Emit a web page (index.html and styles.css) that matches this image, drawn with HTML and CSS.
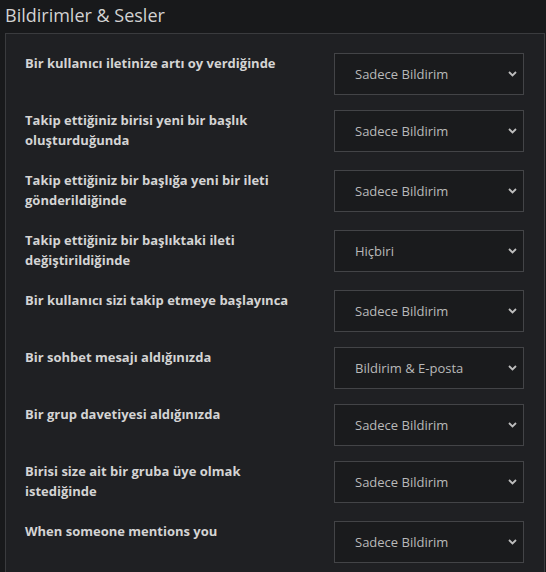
FILE: index.html
```html
<!DOCTYPE html>
<html lang="tr">
<head>
    <meta charset="UTF-8">
    <title>Bildirimler &amp; Sesler</title>
    <meta name="viewport" content="width=device-width, initial-scale=1.0">
    <link rel="stylesheet" href="styles.css">
</head>
<body>

    <h2 class="section-title">Bildirimler &amp; Sesler</h2>

    <div class="panel">
        <div class="setting-row">
            <label for="n-upvote">Bir kullanıcı iletinize artı oy verdiğinde</label>
            <select id="n-upvote">
                <option>Hiçbiri</option>
                <option selected>Sadece Bildirim</option>
                <option>Bildirim &amp; E-posta</option>
            </select>
        </div>

        <div class="setting-row">
            <label for="n-new-topic">Takip ettiğiniz birisi yeni bir başlık oluşturduğunda</label>
            <select id="n-new-topic">
                <option>Hiçbiri</option>
                <option selected>Sadece Bildirim</option>
                <option>Bildirim &amp; E-posta</option>
            </select>
        </div>

        <div class="setting-row">
            <label for="n-new-post">Takip ettiğiniz bir başlığa yeni bir ileti gönderildiğinde</label>
            <select id="n-new-post">
                <option>Hiçbiri</option>
                <option selected>Sadece Bildirim</option>
                <option>Bildirim &amp; E-posta</option>
            </select>
        </div>

        <div class="setting-row">
            <label for="n-post-edit">Takip ettiğiniz bir başlıktaki ileti değiştirildiğinde</label>
            <select id="n-post-edit">
                <option selected>Hiçbiri</option>
                <option>Sadece Bildirim</option>
                <option>Bildirim &amp; E-posta</option>
            </select>
        </div>

        <div class="setting-row">
            <label for="n-follow">Bir kullanıcı sizi takip etmeye başlayınca</label>
            <select id="n-follow">
                <option>Hiçbiri</option>
                <option selected>Sadece Bildirim</option>
                <option>Bildirim &amp; E-posta</option>
            </select>
        </div>

        <div class="setting-row">
            <label for="n-chat">Bir sohbet mesajı aldığınızda</label>
            <select id="n-chat">
                <option>Hiçbiri</option>
                <option>Sadece Bildirim</option>
                <option selected>Bildirim &amp; E-posta</option>
            </select>
        </div>

        <div class="setting-row">
            <label for="n-group-invite">Bir grup davetiyesi aldığınızda</label>
            <select id="n-group-invite">
                <option>Hiçbiri</option>
                <option selected>Sadece Bildirim</option>
                <option>Bildirim &amp; E-posta</option>
            </select>
        </div>

        <div class="setting-row">
            <label for="n-group-request">Birisi size ait bir gruba üye olmak istediğinde</label>
            <select id="n-group-request">
                <option>Hiçbiri</option>
                <option selected>Sadece Bildirim</option>
                <option>Bildirim &amp; E-posta</option>
            </select>
        </div>

        <div class="setting-row">
            <label for="n-mention">When someone mentions you</label>
            <select id="n-mention">
                <option>Hiçbiri</option>
                <option selected>Sadece Bildirim</option>
                <option>Bildirim &amp; E-posta</option>
            </select>
        </div>
    </div>

</body>
</html>
```

FILE: styles.css
```css
/* Temel sıfırlama */
* {
    margin: 0;
    padding: 0;
    box-sizing: border-box;
}

body {
    font-family: 'Open Sans', 'Noto Sans', sans-serif;
    background-color: #18191b;
    color: #d6d6d6;
    padding: 0 0 0 5px;
}

.section-title {
    font-size: 18px;
    font-weight: normal;
    color: #d2d2d2;
    line-height: 30px;
    height: 33px;
}

.panel {
    background-color: #1f2023;
    border: 1px solid #3a3b3e;
    border-right: 1px solid #3a3b3e;
    padding: 19px 20px 20px 19px;
    width: 540px;
}

.setting-row {
    display: grid;
    grid-template-columns: 1fr 190px;
    column-gap: 20px;
    align-items: start;
    margin-bottom: 15px;
}

.setting-row label {
    font-size: 13px;
    font-weight: bold;
    line-height: 20px;
    padding-bottom: 5px;
    color: #d4d4d4;
}

.setting-row select {
    appearance: none;
    -webkit-appearance: none;
    width: 190px;
    height: 42px;
    padding: 0 30px 0 20px;
    font-family: inherit;
    font-size: 13px;
    color: #b9b9b9;
    background-color: #1a1b1d;
    border: 1px solid #434447;
    border-radius: 0;
    /* küçük aşağı ok */
    background-image: url("data:image/svg+xml;utf8,<svg xmlns='http://www.w3.org/2000/svg' width='9' height='6' viewBox='0 0 9 6'><path d='M1 1l3.5 3.5L8 1' fill='none' stroke='%23bdbdbd' stroke-width='1.8'/></svg>");
    background-repeat: no-repeat;
    background-position: right 6px center;
}
```
